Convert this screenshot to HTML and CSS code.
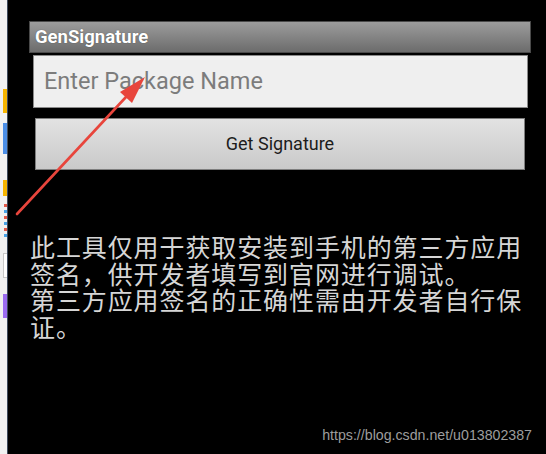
FILE: index.html
```html
<!DOCTYPE html>
<html>
<head>
<meta charset="utf-8">
<link rel="stylesheet" href="styles.css">
</head>
<body>
<div class="page">
  <aside class="side">
    <div class="blip yellow b1"></div>
    <div class="blip blue b2"></div>
    <div class="blip yellow b3"></div>
    <div class="blip dash b4"></div>
    <div class="blip grey b5"></div>
    <div class="blip purple b6"></div>
  </aside>
  <main class="screen">
    <div class="app">
      <div class="titlebar">GenSignature</div>
      <div class="input">Enter Package Name</div>
      <div class="button">Get Signature</div>
    </div>
    <p class="notice">此工具仅用于获取安装到手机的第三方应用签名，供开发者填写到官网进行调试。<br>第三方应用签名的正确性需由开发者自行保证。</p>
    <div class="watermark">https://blog.csdn.net/u013802387</div>
    <svg class="arrow" width="546" height="454" viewBox="0 0 546 454">
      <path d="M17 214 L126 97" stroke="#e8453c" stroke-width="2.6" stroke-linecap="round" fill="none"/>
      <path d="M145 77 L120 92 L132 103 Z" fill="#e8453c"/>
    </svg>
  </main>
</div>
</body>
</html>
```

FILE: styles.css
```css
html, body {
  margin: 0;
  padding: 0;
  background: #000;
}
.page {
  width: 546px;
  height: 454px;
  display: flex;
  position: relative;
  overflow: hidden;
}
.side {
  width: 7px;
  background: #f1f1f1;
  border-right: 1px solid #3e4a5c;
  display: flex;
  flex-direction: column;
  align-items: flex-end;
}
.blip {
  width: 4px;
}
.yellow { background: #f5b400; }
.blue { background: #4b8ee6; }
.grey { background: #fff; border: 1px solid #c8c8c8; border-right: none; width: 3px; }
.purple { background: #9b6cf0; }
.dash {
  background: repeating-linear-gradient(to bottom, #e25a4a 0 3px, transparent 3px 6px, #4aa3e6 6px 9px, transparent 9px 12px);
  width: 3px;
}
.b1 { margin-top: 89px; height: 24px; }
.b2 { margin-top: 10px; height: 31px; }
.b3 { margin-top: 26px; height: 16px; }
.b4 { margin-top: 8px; height: 34px; }
.b5 { margin-top: 15px; height: 23px; }
.b6 { margin-top: 16px; height: 24px; }
.screen {
  flex: 1;
  display: flex;
  flex-direction: column;
  background: #000;
}
.app {
  margin: 21px 0 0 21px;
  width: 502px;
  display: flex;
  flex-direction: column;
}
.titlebar {
  box-sizing: border-box;
  height: 32px;
  background: linear-gradient(to bottom, #9c9c9c, #6c6c6c);
  border: 1px solid #4a4a4a;
  color: #fff;
  font-family: Roboto, "Liberation Sans", sans-serif;
  font-weight: 700;
  font-size: 18.5px;
  line-height: 30px;
  padding-left: 5px;
  text-shadow: 0 0 1px rgba(0,0,0,0.5);
}
.input {
  box-sizing: border-box;
  margin: 2px 3px 0 4px;
  height: 53px;
  background: #efefef;
  border: 1px solid #8a8a8a;
  color: #7c7c7c;
  font-family: Roboto, "Liberation Sans", sans-serif;
  font-size: 23.5px;
  line-height: 51px;
  padding-left: 10px;
}
.button {
  box-sizing: border-box;
  margin: 10px 6px 0 6px;
  height: 52px;
  background: linear-gradient(to bottom, #e2e2e2, #c9c9c9);
  border: 1px solid #7e7e7e;
  color: #1c1c1c;
  font-family: Roboto, "Liberation Sans", sans-serif;
  font-size: 18px;
  line-height: 50px;
  text-align: center;
}
.notice {
  margin: 63px 0 0 22px;
  width: 500px;
  color: #d6d6d6;
  font-family: "Noto Sans CJK SC", sans-serif;
  font-size: 25px;
  letter-spacing: 0.9px;
  line-height: 26.5px;
}
.watermark {
  margin-top: auto;
  margin-bottom: 11px;
  align-self: flex-end;
  margin-right: 14px;
  color: #9d9d9d;
  font-family: "Liberation Sans", Arial, sans-serif;
  font-size: 14.2px;
}
.arrow {
  position: absolute;
  left: 0;
  top: 0;
  pointer-events: none;
}
```
